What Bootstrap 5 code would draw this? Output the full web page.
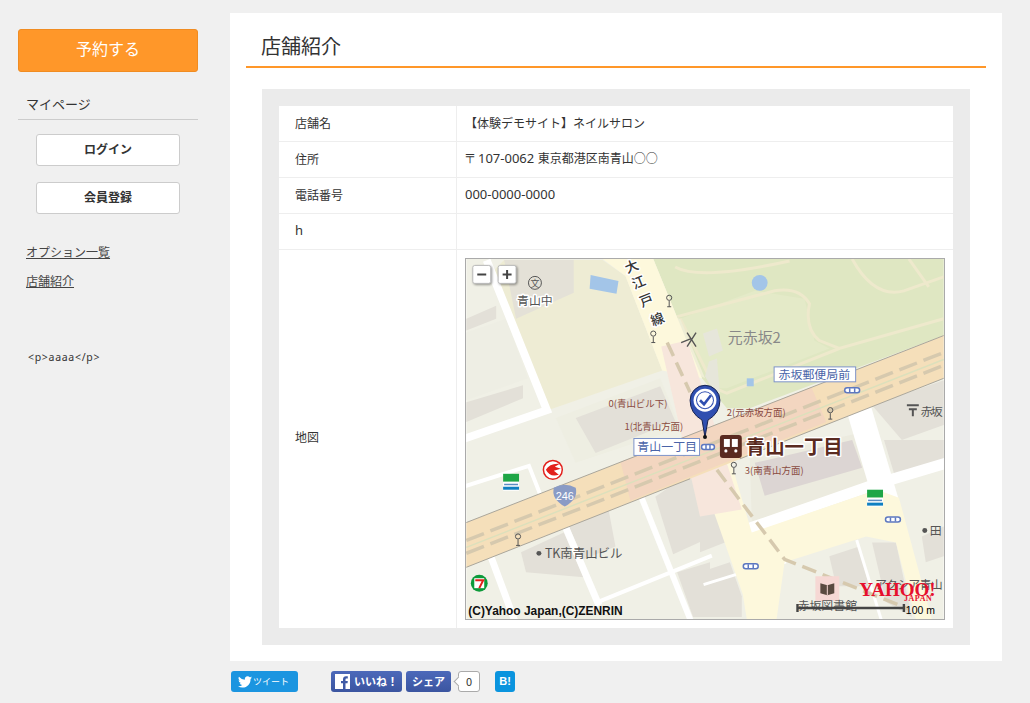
<!DOCTYPE html>
<html lang="ja">
<head>
    <meta charset="UTF-8">
    <meta name="viewport" content="width=device-width, initial-scale=1.0">
    <title>店舗紹介</title>
    <link rel="stylesheet" href="https://cdn.jsdelivr.net/npm/bootstrap@5.3.0/dist/css/bootstrap.min.css">
    <style>
        body {
            background-color: #f0f0f0;
            color: #333;
            font-family: "Noto Sans CJK JP", "Liberation Sans", sans-serif;
            font-size: 12px;
            height: 703px;
            overflow: hidden;
        }
        .side-col { width: 180px; margin-left: 18px; padding-top: 29px; }
        .main-col { width: 772px; margin-left: 32px; margin-top: 13px; }
        .btn-reserve {
            display: block;
            height: 43px;
            line-height: 36px;
            background: #ff9729;
            border: 1px solid #f08c22;
            border-radius: 3px;
            color: #fff;
            font-size: 16px;
            padding: 0;
            width: 100%;
        }
        .btn-reserve:hover { background: #ff9729; color: #fff; }
        .mypage-title {
            margin-top: 23px;
            padding: 0 0 5px 8px;
            height: 25px;
            border-bottom: 1px solid #ccc;
            font-size: 13px;
            line-height: 18px;
        }
        .btn-member {
            display: block;
            width: 144px;
            height: 32px;
            line-height: 28px;
            margin: 14px 0 0 18px;
            padding: 0;
            background: #fff;
            border: 1px solid #ccc;
            border-radius: 3px;
            color: #333;
            font-size: 12px;
            font-weight: 700;
        }
        .btn-member + .btn-member { margin-top: 16px; }
        .side-links { margin: 29px 0 0 8px; }
        .side-links a { display: block; color: #444; font-size: 12px; line-height: 18px; margin-bottom: 11px; }
        .free-text {
            margin: 59px 0 0 10px;
            font-family: "Noto Sans", sans-serif;
            font-size: 10.5px;
            line-height: 16px;
            letter-spacing: .7px;
        }
        .shop-panel { background: #fff; height: 648px; padding: 0 16px; }
        .shop-title {
            height: 55px;
            padding: 19px 0 0 15px;
            margin: 0;
            border-bottom: 2px solid #ff9729;
            font-size: 20px;
            line-height: 28px;
            font-weight: 400;
        }
        .shop-box { margin: 21px 16px 0; padding: 17px; background: #ebebeb; height: 556px; }
        .shop-table { margin: 0; width: 100%; --bs-table-color: #333; }
        .shop-table th, .shop-table td {
            padding: 0 8px;
            height: 36px;
            border-bottom: 1px solid #eee;
            font-size: 12px;
            font-weight: 400;
            vertical-align: middle;
        }
        .shop-table tr:first-child th, .shop-table tr:first-child td { height: 35px; }
        .shop-table tr:last-child th, .shop-table tr:last-child td { border-bottom: 0; height: 378px; padding: 8px; }
        .shop-table th, .shop-table tr:last-child th { width: 178px; padding-left: 16px; border-right: 1px solid #eee; }
        .shop-table tr:last-child th { padding-bottom: 12px; }
        .num-text { font-family: "Noto Sans", sans-serif; font-size: 13px; }
        .map-svg { display: block; border: 1px solid #aaa; }
        .map-svg text { font-family: "Noto Sans CJK JP", "Liberation Sans", sans-serif; }
        .map-svg .halo { paint-order: stroke; stroke: #fff; stroke-width: 3px; stroke-linejoin: round; }
        .map-svg .latin { font-family: "Liberation Sans", sans-serif; }
        .map-svg .yahoo { font-family: "Liberation Serif", serif; }
        .share-bar { height: 21px; margin-top: 10px; padding-left: 1px; }
        .share-btn {
            height: 21px;
            border-radius: 3px;
            color: #fff;
            font-size: 9px;
            line-height: 21px;
            text-decoration: none;
        }
        .share-tw { width: 67px; background: #1b95e0; padding-left: 7px; gap: 1px; }
        .share-fb { background: linear-gradient(#4c69ba, #3b55a0); font-weight: 700; font-size: 11px; }
        .share-like { width: 71px; margin-left: 33px; padding-left: 4px; gap: 4px; }
        .share-sh { width: 45px; margin-left: 4px; justify-content: center; }
        .share-count {
            position: relative;
            width: 22px;
            height: 21px;
            margin-left: 7px;
            background: #fff;
            border: 1px solid #aaa;
            border-radius: 3px;
            text-align: center;
            line-height: 19px;
            font-size: 11px;
        }
        .share-count::before {
            content: "";
            position: absolute;
            left: -4px;
            top: 6px;
            width: 7px;
            height: 7px;
            background: #fff;
            border-left: 1px solid #aaa;
            border-bottom: 1px solid #aaa;
            transform: rotate(45deg);
        }
        .share-hb {
            width: 20px;
            margin-left: 15px;
            background: #0a94de;
            text-align: center;
            font-family: "Liberation Sans", sans-serif;
            font-weight: 700;
            font-size: 11px;
        }
    </style>
</head>
<body>
    <div class="d-flex">
        <aside class="side-col">
            <a href="#" class="btn btn-reserve">予約する</a>
            <div class="mypage-title">マイページ</div>
            <a href="#" class="btn btn-member">ログイン</a>
            <a href="#" class="btn btn-member">会員登録</a>
            <div class="side-links">
                <a href="#">オプション一覧</a>
                <a href="#">店舗紹介</a>
            </div>
            <div class="free-text">&lt;p&gt;aaaa&lt;/p&gt;</div>
        </aside>

        <div class="main-col">
            <main class="shop-panel">
                <h2 class="shop-title">店舗紹介</h2>
                <div class="shop-box">
                    <table class="table shop-table bg-white">
                        <tbody>
                            <tr><th>店舗名</th><td>【体験デモサイト】ネイルサロン</td></tr>
                            <tr><th>住所</th><td><span class="num-text">〒107-0062 </span>東京都港区南青山○○</td></tr>
                            <tr><th>電話番号</th><td><span class="num-text">000-0000-0000</span></td></tr>
                            <tr><th><span class="num-text">h</span></th><td></td></tr>
                            <tr>
                                <th>地図</th>
                                <td>
                                    <svg class="map-svg" width="480" height="362" viewBox="0 0 480 362">
                                        <rect width="480" height="362" fill="#f0f0e6"/>
                                        <!-- park -->
                                        <polygon points="188,0 480,0 480,77 285,150 262,150 237,120" fill="#dfe7c2"/>
                                        <polygon points="215,60 290,32 340,40 345,60 350,82 365,90 262,130 250,130" fill="#e4eac8"/>
                                        <g fill="none" stroke="#eee9cc" stroke-width="3">
                                            <path d="M212,58 L310,32 Q335,28 345,45 Q340,70 355,82 L375,90 L480,60"/>
                                            <path d="M215,60 L250,130 L262,135 L375,90"/>
                                            <path d="M210,8 Q235,22 325,2"/>
                                            <path d="M388,0 Q410,40 440,32 L480,18"/>
                                            <path d="M445,0 L465,28"/>
                                        </g>
                                        <polygon points="178,50 215,60 240,120 222,110 195,70" fill="#efeed6"/>
                                        <polygon points="238,75 252,70 258,92 244,98" fill="#e6e6da"/>
                                        <polygon points="244,103 252,100 256,148 250,135 240,118" fill="#e6e6da"/>
                                        <circle cx="295" cy="24" r="8" fill="#a3c5e8"/>
                                        <rect x="282" y="120" width="7" height="8" fill="#a3c5e8"/>
                                        <!-- school -->
                                        <polygon points="38,1 137,1 160,17 197,112 82,152 25,14" fill="#eeecd4"/>
                                        <polygon points="38,1 108,1 108,34 50,60" fill="#e4e1d7"/>
                                        <polygon points="125,16 153,22 151,35 124,30" fill="#a3c5e8"/>
                                        <!-- pale lots -->
                                        <polygon points="0,74 40,60 62,120 0,142" fill="#eeeee4"/>
                                        <polygon points="90,160 195,120 215,170 110,205" fill="#eeeee2"/>
                                        <!-- left blocks -->
                                        <polygon points="0,60 30,47 30,60 0,72" fill="#e3e0d8"/>
                                        <polygon points="0,144 57,127 57,140 0,164" fill="#e3e0d8"/>
                                        <polygon points="110,160 195,128 210,163 130,195" fill="#e3e0d8"/>
                                        <polygon points="55,295 98,275 118,320 60,315" fill="#e3e0d8"/>
                                        <polygon points="103,269 143,252 150,289 118,302" fill="#e3e0d8"/>
                                        <polygon points="190,239 225,215 245,232 245,280 208,297" fill="#e3e0d8"/>
                                        <polygon points="212,315 245,305 245,360 228,360" fill="#e3e0d8"/>
                                        <polygon points="235,250 253,242 260,285 235,295" fill="#e3e0d8"/>
                                        <polygon points="235,315 265,305 277,339 277,360 235,360" fill="#e3e0d8"/>
                                        <polygon points="408,147 480,122 480,167 438,182" fill="#e3e0d8"/>
                                        <polygon points="420,182 480,182 480,208 432,222" fill="#e3e0d8"/>
                                        <polygon points="458,279 480,269 480,299 462,305" fill="#e3e0d8"/>
                                        <polygon points="408,285 432,285 448,360 422,345" fill="#e3e0d8"/>
                                        <polygon points="365,299 395,289 405,329 372,329" fill="#e3e0d8"/>
                                        <polygon points="285,200 395,175 410,224 287,264" fill="#ecebdf"/>
                                        <polygon points="290,205 388,182 398,210 300,238" fill="#dcd5d3"/>
                                        <!-- white roads -->
                                        <g fill="none" stroke="#fff" stroke-linecap="square">
                                            <path d="M22,5 L81,152 L0,180" stroke-width="8"/>
                                            <path d="M0,228 L63,208 L74,236" stroke-width="4"/>
                                            <path d="M25,300 L48,362" stroke-width="7"/>
                                            <path d="M100,270 L132,345" stroke-width="7"/>
                                            <path d="M175,237 L225,362" stroke-width="6"/>
                                            <path d="M132,345 L245,299" stroke-width="4"/>
                                            <path d="M287,270 L413,226 L480,206" stroke-width="11"/>
                                            <path d="M393,145 L420,236" stroke-width="25"/>
                                            <path d="M320,305 L278,320" stroke-width="3"/>
                                            <path d="M393,284 L417,362" stroke-width="3"/>
                                            <path d="M240,327 L275,316" stroke-width="3"/>
                                        </g>
                                        <!-- roads -->
                                        <polygon points="137,0 160,17 197,112 237,120 188,0" fill="#fdf8dc"/>
                                        <polygon points="235,215 278,337 282,362 312,362 320,305 402,279 432,285 452,362 468,362 435,240 413,232 287,275 265,200" fill="#fdf8dc"/>
                                        <polygon points="196,88 222,82 277,252 235,259" fill="#f7e6dc"/>
                                        <polygon points="0,265 480,77 480,120 0,310" fill="#f5dfba"/>
                                        <polygon points="155,204 347,129 362,164 165,243" fill="#f3d6c0"/>
                                        <path d="M0,265 L480,77 M0,310 L225,221 M275,201 L480,120" stroke="#a9a59a" stroke-width="1" fill="none"/>
                                        <g fill="none" stroke="#d6c9ae" stroke-width="3.500" stroke-dasharray="19 7">
                                            <path d="M0,283 L480,94"/>
                                            <path d="M0,296 L480,107"/>
                                        </g>
                                        <path d="M0,290 L480,101" stroke="#dce0bc" stroke-width="1.500" fill="none"/>
                                        <g fill="none" stroke="#d6c9ae" stroke-width="3.500" stroke-dasharray="15 7">
                                            <path d="M202,84 L225,134"/>
                                            <path d="M252,212 L320,302 L445,352"/>
                                        </g>
                                        <!-- labels -->
                                        <text x="263" y="84" font-size="15" fill="#888">元赤坂2</text>
                                        <circle cx="69" cy="24" r="6.500" fill="none" stroke="#555"/>
                                        <text x="69" y="28" font-size="9" fill="#555" text-anchor="middle">文</text>
                                        <text x="51" y="46" font-size="12" fill="#555" class="halo">青山中</text>
                                        <g font-size="13.500" font-weight="500" fill="#333" class="halo" text-anchor="middle">
                                            <text transform="translate(168,12) rotate(-22)">大</text>
                                            <text transform="translate(175,28) rotate(-22)">江</text>
                                            <text transform="translate(183,46) rotate(-22)">戸</text>
                                            <text transform="translate(194,65) rotate(-22)">線</text>
                                        </g>
                                        <text x="143" y="149" font-size="9.500" fill="#8a4a40">0(青山ビル下)</text>
                                        <text x="159" y="172" font-size="9.500" fill="#8a4a40">1(北青山方面)</text>
                                        <text x="262" y="158" font-size="9.500" fill="#8a4a40">2(元赤坂方面)</text>
                                        <text x="280" y="216" font-size="9.500" fill="#8a4a40">3(南青山方面)</text>
                                        <!-- pois -->
                                        <g fill="none" stroke="#555">
                                            <circle cx="204" cy="39" r="2.600"/><path d="M204,42 V48 M202,48 H206"/>
                                            <circle cx="188" cy="75" r="2.600"/><path d="M188,78 V84 M186,84 H190"/>
                                            <circle cx="366" cy="152" r="2.600"/><path d="M366,155 V161 M364,161 H368"/>
                                            <circle cx="269" cy="207" r="2.600"/><path d="M269,210 V216 M267,216 H271"/>
                                            <circle cx="52" cy="279" r="2.600"/><path d="M52,282 V288 M50,288 H54"/>
                                        </g>
                                        <path d="M222,74 L231,88 M231,74 L222,88 M216,84 L226,80" stroke="#555" fill="none" stroke-width="1.400"/>
                                        <!-- station signs -->
                                        <rect x="309.500" y="108.500" width="82" height="15" fill="#fff" stroke="#7d93c9"/>
                                        <text x="314" y="120.500" font-size="12" fill="#4a64a8">赤坂郵便局前</text>
                                        <rect x="168.500" y="180.500" width="66" height="17" fill="#fff" stroke="#7d93c9"/>
                                        <text x="172" y="193.500" font-size="12" fill="#4a64a8">青山一丁目</text>
                                        <g fill="#fff" stroke="#5d78c0" stroke-width="1.500">
                                            <rect x="380.500" y="129.500" width="15" height="5" rx="2.500"/>
                                            <rect x="236.500" y="186.500" width="13" height="5" rx="2.500"/>
                                            <rect x="421.500" y="259.500" width="15" height="5" rx="2.500"/>
                                            <rect x="278.500" y="306.500" width="15" height="5" rx="2.500"/>
                                            <path d="M385.500,130 V134 M390.500,130 V134 M241,187 V191 M245,187 V191 M426.500,260 V264 M431.500,260 V264 M283.500,307 V311 M288.500,307 V311"/>
                                        </g>
                                        <rect x="255" y="177" width="22" height="23" rx="3" fill="#5a2a20"/>
                                        <rect x="259" y="181" width="6" height="8" fill="#fff"/>
                                        <rect x="267" y="181" width="6" height="8" fill="#fff"/>
                                        <circle cx="261" cy="193" r="1.600" fill="#fff"/>
                                        <circle cx="271" cy="193" r="1.600" fill="#fff"/>
                                        <text x="281" y="196" font-size="19.500" font-weight="700" fill="#5a2a20" class="halo">青山一丁目</text>
                                        <!-- route shield -->
                                        <path d="M88,230 Q99,224 110,230 Q113,241 99,249 Q85,241 88,230 Z" fill="#8a9bc5"/>
                                        <text x="99" y="242" font-size="11" fill="#fff" text-anchor="middle" class="latin">246</text>
                                        <circle cx="73" cy="296" r="2.500" fill="#555"/>
                                        <text x="79" y="301" font-size="12.500" fill="#555">TK南青山ビル</text>
                                        <path d="M443,147 H455 M445,151 H453 M449,151 V158" stroke="#555" stroke-width="2" fill="none"/>
                                        <text x="457" y="158" font-size="12" fill="#555" textLength="22">赤坂</text>
                                        <circle cx="461" cy="273" r="2.500" fill="#555"/>
                                        <text x="466" y="278" font-size="12" fill="#555">田</text>
                                        <text x="411" y="332" font-size="12" fill="#555" textLength="68">アクシア青山</text>
                                        <rect x="351" y="319" width="24" height="25" fill="#f6d8d4"/>
                                        <path d="M356,326 L363,328 L370,326 V336 L363,338 L356,336 Z" fill="#5a4a40"/>
                                        <path d="M363,328 V338" stroke="#f6d8d4"/>
                                        <text x="333" y="353" font-size="12" fill="#555">赤坂図書館</text>
                                        <!-- fami ma -->
                                        <g>
                                            <rect x="37" y="216" width="16" height="8" fill="#1fa647"/>
                                            <rect x="37" y="224" width="16" height="9" fill="#fff"/>
                                            <rect x="38" y="226" width="14" height="1.500" fill="#5b8cc0"/>
                                            <rect x="37" y="229" width="16" height="3" fill="#0f7fc1"/>
                                            <rect x="403" y="232" width="16" height="8" fill="#1fa647"/>
                                            <rect x="403" y="240" width="16" height="9" fill="#fff"/>
                                            <rect x="404" y="242" width="14" height="1.500" fill="#5b8cc0"/>
                                            <rect x="403" y="245" width="16" height="3" fill="#0f7fc1"/>
                                        </g>
                                        <circle cx="87" cy="212" r="9.500" fill="#fff" stroke="#e2211c" stroke-width="1.500"/>
                                        <path d="M80,212 Q84,205 94,206 L89,209 L95,211 L88,213 L93,217 Q84,220 80,212 Z" fill="#e2211c"/>
                                        <circle cx="13" cy="326" r="8.500" fill="#0d9a3a"/>
                                        <rect x="8" y="321" width="10" height="10" fill="#fff"/>
                                        <path d="M9,323 H17 L13,331" fill="none" stroke="#e2211c" stroke-width="2"/>
                                        <!-- pin -->
                                        <path d="M240,179 L237,162 Q225,155 225,142 A15,15 0 1 1 255,142 Q255,155 243,162 Z" fill="#2f4fb0" stroke="#15214f"/>
                                        <circle cx="240" cy="142" r="11.500" fill="#fff"/>
                                        <circle cx="240" cy="142" r="9" fill="#2f4fb0"/>
                                        <circle cx="240" cy="142" r="8" fill="#fff"/>
                                        <path d="M235,142 L239,146 L246,137" fill="none" stroke="#2f4fb0" stroke-width="2.600"/>
                                        <circle cx="240" cy="179" r="2" fill="#111"/>
                                        <!-- yahoo and copyright -->
                                        <text x="395" y="339" font-size="20" font-weight="700" fill="#e60f2d" class="yahoo" textLength="77" lengthAdjust="spacingAndGlyphs">YAHOO!</text>
                                        <text x="440" y="344" font-size="8" font-weight="700" fill="#e60f2d" class="yahoo" textLength="28">JAPAN</text>
                                        <path d="M333,347 V355 M333,351 H440 M440,347 V355" stroke="#444" stroke-width="2.400" fill="none"/>
                                        <text x="442" y="357" font-size="10.500" fill="#000" class="latin">100 m</text>
                                        <text x="2" y="357.500" font-size="12" font-weight="700" fill="#111" class="latin">(C)Yahoo Japan,(C)ZENRIN</text>
                                        <!-- zoom buttons -->
                                        <g fill="#fff" stroke="#bbb" style="filter: drop-shadow(1px 1px 1px rgba(0,0,0,.4))">
                                            <rect x="6.500" y="6.500" width="18" height="18" rx="2"/>
                                            <rect x="32" y="6.500" width="18" height="18" rx="2"/>
                                        </g>
                                        <path d="M11,15.500 H20 M36.500,15.500 H45.500 M41,11 V20" stroke="#444" stroke-width="2" fill="none"/>
                                    </svg>
                                </td>
                            </tr>
                        </tbody>
                    </table>
                </div>
            </main>
            <div class="share-bar d-flex align-items-start">
                <a href="#" class="share-btn share-tw d-flex align-items-center">
                    <svg width="14" height="12" viewBox="0 0 24 20"><path fill="#fff" d="M24 2.400a10 10 0 0 1-2.800.8A5 5 0 0 0 23.300 .5a10 10 0 0 1-3.100 1.200A4.900 4.900 0 0 0 11.800 6.100 14 14 0 0 1 1.700 1a4.900 4.900 0 0 0 1.500 6.500A5 5 0 0 1 1 6.900v.1a4.900 4.900 0 0 0 3.900 4.800 5 5 0 0 1-2.200.1 4.900 4.900 0 0 0 4.600 3.400A9.900 9.900 0 0 1 0 17.400 14 14 0 0 0 7.500 19.600c9.100 0 14-7.500 14-14v-.6A10 10 0 0 0 24 2.400z"/></svg>
                    ツイート
                </a>
                <a href="#" class="share-btn share-fb share-like d-flex align-items-center">
                    <svg width="15" height="15" viewBox="0 0 15 15"><rect width="15" height="15" fill="#fff"/><path fill="#3f5aa6" d="M10.500 15V9.200h2l.3-2.300h-2.300V5.500c0-.7.2-1.100 1.100-1.100h1.200V2.300c-.2 0-.9-.1-1.800-.1-1.800 0-3 1.100-3 3.100v1.600h-2v2.300h2V15z"/></svg>
                    いいね！
                </a>
                <a href="#" class="share-btn share-fb share-sh d-flex">シェア</a>
                <div class="share-count">0</div>
                <a href="#" class="share-btn share-hb">B!</a>
            </div>
        </div>
    </div>
    <script src="https://cdn.jsdelivr.net/npm/bootstrap@5.3.0/dist/js/bootstrap.bundle.min.js"></script>
</body>
</html>
